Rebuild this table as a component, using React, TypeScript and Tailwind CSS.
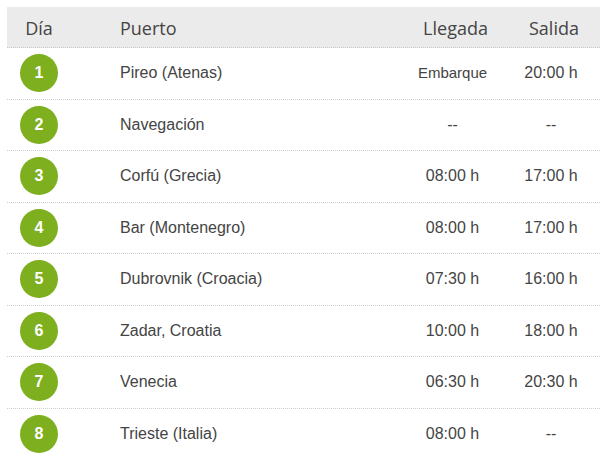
const rows = [
  { n: 1, port: "Pireo (Atenas)", arr: "Embarque", dep: "20:00 h" },
  { n: 2, port: "Navegación", arr: "--", dep: "--" },
  { n: 3, port: "Corfú (Grecia)", arr: "08:00 h", dep: "17:00 h" },
  { n: 4, port: "Bar (Montenegro)", arr: "08:00 h", dep: "17:00 h" },
  { n: 5, port: "Dubrovnik (Croacia)", arr: "07:30 h", dep: "16:00 h" },
  { n: 6, port: "Zadar, Croatia", arr: "10:00 h", dep: "18:00 h" },
  { n: 7, port: "Venecia", arr: "06:30 h", dep: "20:30 h" },
  { n: 8, port: "Trieste (Italia)", arr: "08:00 h", dep: "--" },
];

const App = () => {
  return (
    <div className="min-h-screen bg-white pt-[7px] pl-[7px] pr-[12px] font-['Liberation_Sans',Arial,sans-serif]">
      {/* Header */}
      <div className="flex h-[41px] items-center pt-[3px] bg-[#ebebeb] border-b border-dotted border-[#c8c8c8] text-[18px] font-medium text-[#444] font-['Open_Sans',sans-serif]">
        <div className="w-[64px] text-center">Día</div>
        <div className="flex-1 pl-[49px]">Puerto</div>
        <div className="w-[99px] text-center pl-[6px]">Llegada</div>
        <div className="w-[98px] text-center pl-[6px]">Salida</div>
      </div>

      {/* Rows */}
      {rows.map((r) => (
        <div
          key={r.n}
          className="flex h-[51.5px] items-center border-b border-dotted border-[#cfcfcf] last:border-b-0 text-[16px] text-[#444]"
        >
          <div className="w-[64px] flex justify-center">
            <span className="flex h-[38px] w-[38px] items-center justify-center rounded-full bg-[#7eaf1f] text-[16px] font-bold text-white">
              {r.n}
            </span>
          </div>
          <div className="flex-1 pl-[49px]">{r.port}</div>
          <div className={`w-[99px] text-center ${r.arr === "Embarque" ? "text-[15px]" : ""}`}>
            {r.arr}
          </div>
          <div className="w-[98px] text-center">{r.dep}</div>
        </div>
      ))}
    </div>
  );
};

export default App;
